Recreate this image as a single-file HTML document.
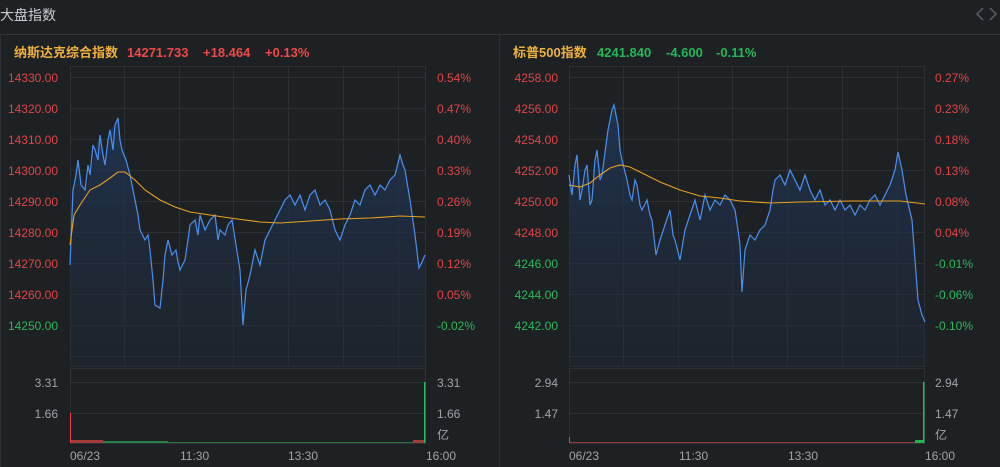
<!DOCTYPE html>
<html><head><meta charset="utf-8"><style>
html,body{margin:0;padding:0;background:#1e2124;width:1000px;height:467px;overflow:hidden}
svg{display:block}
text{font-family:"Liberation Sans","Noto Sans CJK SC",sans-serif}
</style></head><body>
<svg width="1000" height="467" viewBox="0 0 1000 467" xmlns="http://www.w3.org/2000/svg">
<defs>
<linearGradient id="g" x1="0" y1="0" x2="0" y2="1"><stop offset="0" stop-color="#1f3556" stop-opacity="0.9"/><stop offset="1" stop-color="#1f2a38" stop-opacity="0.3"/></linearGradient>
</defs>
<text x="0" y="20" font-size="14" fill="#c8ccd0">大盘指数</text>
<path d="M983 8 L977 14 L983 20 M990 8 L996 14 L990 20" stroke="#5a5f66" stroke-width="1.5" fill="none"/>
<line x1="0" y1="34.5" x2="1000" y2="34.5" stroke="#33373c"/>
<line x1="0.5" y1="34" x2="0.5" y2="467" stroke="#2c3034"/>
<line x1="499.5" y1="34" x2="499.5" y2="467" stroke="#2c3034"/>

<!-- LEFT -->
<text x="14" y="57" font-size="13" font-weight="bold" fill="#f0b23c">纳斯达克综合指数</text>
<g font-size="13" font-weight="bold" fill="#f04848"><text x="127" y="57">14271.733</text><text x="203" y="57">+18.464</text><text x="265" y="57">+0.13%</text></g>
<g stroke="#2c3035" fill="none">
<rect x="70.5" y="66.5" width="355" height="300"/>
<path d="M124.5 66V367M179.5 66V367M233.5 66V367M288.5 66V367M343.5 66V367M398.5 66V367"/>
<path d="M70 77.5H425M70 108.5H425M70 139.5H425M70 170.5H425M70 201.5H425M70 232.5H425M70 263.5H425M70 294.5H425M70 325.5H425M70 356.5H425"/>
<rect x="70.5" y="368.5" width="355" height="75"/>
<path d="M70 382.5H425M70 413.5H425"/>
</g>
<polygon fill="url(#g)" points="70,367 70,265 73,190 78,160 85,190 90,175 95,150 100,135 105,165 110,130 115,125 118,118 122,150 126,160 130,175 135,200 140,230 145,240 150,250 155,305 160,308 163,280 168,240 172,255 176,250 180,270 185,260 190,225 195,220 200,215 205,230 210,220 215,215 220,230 225,235 232,220 236,245 240,270 243,325 246,290 250,275 255,250 260,265 265,240 270,230 275,220 280,210 285,200 290,195 295,205 300,195 305,210 310,195 315,190 320,205 325,200 330,210 335,230 340,240 345,225 350,215 355,200 360,205 365,190 370,185 375,195 380,185 385,190 390,180 395,175 400,155 405,170 410,200 415,235 419,268 425,255 425,367"/>
<polyline fill="none" stroke="#4a90f0" stroke-width="1.2" points="70,265 73,190 76,175 78,160 81,185 85,190 88,165 90,175 93,145 95,150 98,160 100,135 103,155 105,165 108,140 110,130 113,150 115,125 118,118 120,140 122,150 126,160 130,175 133,190 135,200 138,215 140,230 145,240 148,235 150,250 153,280 155,305 160,308 163,280 165,255 168,240 172,255 176,250 178,262 180,270 185,260 188,240 190,225 195,220 198,235 200,215 205,230 210,220 215,215 218,240 220,230 225,235 228,225 232,220 236,245 240,270 243,325 246,290 250,275 255,250 260,265 265,240 270,230 275,220 280,210 285,200 290,195 295,205 300,195 305,210 310,195 315,190 320,205 325,200 330,210 335,230 340,240 345,225 350,215 355,200 360,205 365,190 370,185 375,195 380,185 385,190 390,180 395,175 400,155 403,165 405,170 410,200 415,235 419,268 422,262 425,255"/>
<polyline fill="none" stroke="#e8a020" stroke-width="1.1" points="70,245 74,215 80,205 90,190 100,185 110,178 118,172 125,172 135,180 145,190 160,200 175,207 190,212 210,215 230,218 260,222 280,223 310,221 340,219 370,218 400,216 425,217"/>
<g font-size="12" text-anchor="end">
<text x="58" y="82" fill="#e04545">14330.00</text><text x="58" y="113" fill="#e04545">14320.00</text><text x="58" y="144" fill="#e04545">14310.00</text><text x="58" y="175" fill="#e04545">14300.00</text><text x="58" y="206" fill="#e04545">14290.00</text><text x="58" y="237" fill="#e04545">14280.00</text><text x="58" y="268" fill="#e04545">14270.00</text><text x="58" y="299" fill="#e04545">14260.00</text><text x="58" y="330" fill="#28b858">14250.00</text>
<text x="58" y="387" fill="#a0a4a8">3.31</text><text x="58" y="418" fill="#a0a4a8">1.66</text>
</g>
<g font-size="12">
<text x="437" y="82" fill="#e04545">0.54%</text><text x="437" y="113" fill="#e04545">0.47%</text><text x="437" y="144" fill="#e04545">0.40%</text><text x="437" y="175" fill="#e04545">0.33%</text><text x="437" y="206" fill="#e04545">0.26%</text><text x="437" y="237" fill="#e04545">0.19%</text><text x="437" y="268" fill="#e04545">0.12%</text><text x="437" y="299" fill="#e04545">0.05%</text><text x="437" y="330" fill="#28b858">-0.02%</text>
<text x="437" y="387" fill="#a0a4a8">3.31</text><text x="437" y="418" fill="#a0a4a8">1.66</text><text x="437" y="439" fill="#a0a4a8">亿</text>
<text x="70" y="460" fill="#a0a4a8">06/23</text><text x="180" y="460" fill="#a0a4a8">11:30</text><text x="288" y="460" fill="#a0a4a8">13:30</text><text x="426" y="460" fill="#a0a4a8">16:00</text>
</g>
<rect x="70" y="413" width="1" height="30" fill="#f04040"/>
<rect x="71" y="440" width="32" height="3" fill="#c84040" opacity="0.8"/>
<rect x="103" y="441" width="65" height="2" fill="#2a9a50" opacity="0.8"/>
<rect x="168" y="442" width="245" height="1" fill="#2a9a50" opacity="0.7"/>
<rect x="413" y="440" width="11" height="3" fill="#c84040" opacity="0.8"/>
<rect x="424" y="382" width="1.5" height="61" fill="#22c060"/>

<!-- RIGHT -->
<text x="513" y="57" font-size="13" font-weight="bold" fill="#f0b23c">标普500指数</text>
<g font-size="13" font-weight="bold" fill="#22b858"><text x="597" y="57">4241.840</text><text x="666" y="57">-4.600</text><text x="716" y="57">-0.11%</text></g>
<g stroke="#2c3035" fill="none">
<rect x="569.5" y="66.5" width="355" height="300"/>
<path d="M623.5 66V367M678.5 66V367M732.5 66V367M787.5 66V367M842.5 66V367M897.5 66V367"/>
<path d="M569 77.5H925M569 108.5H925M569 139.5H925M569 170.5H925M569 201.5H925M569 232.5H925M569 263.5H925M569 294.5H925M569 325.5H925M569 356.5H925"/>
<rect x="569.5" y="368.5" width="355" height="75"/>
<path d="M569 382.5H925M569 413.5H925"/>
</g>
<polygon fill="url(#g)" points="569,367 569,175 572,195 577,155 582,190 587,165 592,200 597,150 602,175 606,145 610,120 614,105 618,125 622,160 627,180 632,200 637,185 642,210 647,200 652,220 656,255 660,240 665,225 670,210 675,240 680,260 685,230 690,215 695,200 700,220 705,195 710,210 715,200 720,205 725,195 730,200 735,210 740,245 742,292 745,250 750,235 755,240 760,230 765,225 770,210 775,180 780,175 785,185 790,170 795,180 800,190 805,175 810,190 815,200 820,190 825,205 830,200 835,210 840,200 845,210 850,205 855,215 860,205 865,210 870,200 875,195 880,205 885,195 890,185 895,170 898,152 902,170 906,195 912,220 915,260 918,300 922,315 925,322 925,367"/>
<polyline fill="none" stroke="#4a90f0" stroke-width="1.2" points="569,175 572,195 575,165 577,155 580,200 582,190 585,170 587,165 590,205 592,200 595,160 597,150 600,180 602,175 604,160 606,145 608,130 610,120 612,110 614,105 616,115 618,125 620,150 622,160 627,180 630,195 632,200 635,180 637,185 640,205 642,210 647,200 650,215 652,220 656,255 660,240 665,225 670,210 673,235 675,240 680,260 685,230 690,215 695,200 700,220 705,195 710,210 715,200 720,205 725,195 730,200 735,210 738,230 740,245 742,292 745,250 750,235 755,240 760,230 765,225 770,210 773,190 775,180 780,175 785,185 790,170 795,180 800,190 805,175 810,190 815,200 820,190 825,205 830,200 835,210 840,200 845,210 850,205 855,215 860,205 865,210 870,200 875,195 880,205 885,195 890,185 895,170 898,152 902,170 906,195 912,220 915,260 918,300 922,315 925,322"/>
<polyline fill="none" stroke="#e8a020" stroke-width="1.1" points="569,185 580,187 590,183 600,175 610,168 620,165 630,167 640,172 660,182 680,190 700,196 720,198 740,201 770,203 800,202 850,201 900,201 925,204"/>
<g font-size="12" text-anchor="end">
<text x="558" y="82" fill="#e04545">4258.00</text><text x="558" y="113" fill="#e04545">4256.00</text><text x="558" y="144" fill="#e04545">4254.00</text><text x="558" y="175" fill="#e04545">4252.00</text><text x="558" y="206" fill="#e04545">4250.00</text><text x="558" y="237" fill="#e04545">4248.00</text><text x="558" y="268" fill="#28b858">4246.00</text><text x="558" y="299" fill="#28b858">4244.00</text><text x="558" y="330" fill="#28b858">4242.00</text>
<text x="558" y="387" fill="#a0a4a8">2.94</text><text x="558" y="418" fill="#a0a4a8">1.47</text>
</g>
<g font-size="12">
<text x="935" y="82" fill="#e04545">0.27%</text><text x="935" y="113" fill="#e04545">0.23%</text><text x="935" y="144" fill="#e04545">0.18%</text><text x="935" y="175" fill="#e04545">0.13%</text><text x="935" y="206" fill="#e04545">0.08%</text><text x="935" y="237" fill="#e04545">0.04%</text><text x="935" y="268" fill="#28b858">-0.01%</text><text x="935" y="299" fill="#28b858">-0.06%</text><text x="935" y="330" fill="#28b858">-0.10%</text>
<text x="935" y="387" fill="#a0a4a8">2.94</text><text x="935" y="418" fill="#a0a4a8">1.47</text><text x="935" y="439" fill="#a0a4a8">亿</text>
<text x="569" y="460" fill="#a0a4a8">06/23</text><text x="679" y="460" fill="#a0a4a8">11:30</text><text x="788" y="460" fill="#a0a4a8">13:30</text><text x="925" y="460" fill="#a0a4a8">16:00</text>
</g>
<rect x="569" y="437" width="1" height="6" fill="#f04040"/>
<rect x="570" y="442" width="350" height="1" fill="#c84040" opacity="0.7"/>
<rect x="915" y="440" width="8" height="3" fill="#22b050"/>
<rect x="923" y="382" width="1.5" height="61" fill="#22c060"/>
</svg>
</body></html>
